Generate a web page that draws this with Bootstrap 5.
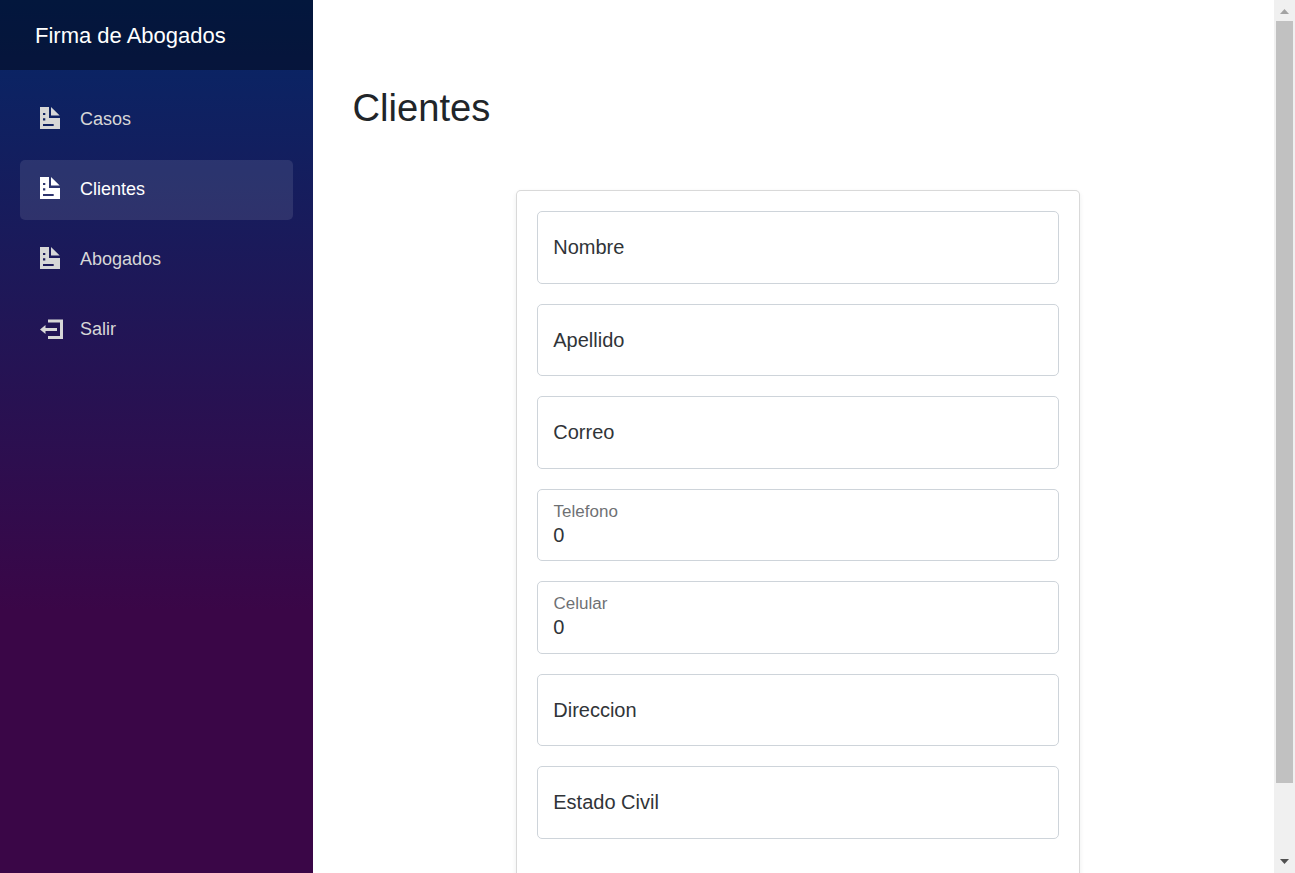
<!DOCTYPE html>
<html lang="es">
<head>
<meta charset="utf-8">
<title>Clientes</title>
<meta name="viewport" content="width=device-width, initial-scale=1">
<link href="https://cdn.jsdelivr.net/npm/bootstrap@5.3.0/dist/css/bootstrap.min.css" rel="stylesheet">
<style>
html { font-size: 20px; }
body { font-family: "Liberation Sans", Arial, sans-serif; }
.sidebar { width: 312.5px; background-image: linear-gradient(180deg, rgb(5,39,103) 0%, #3a0647 70%); }
.sidebar .nav { gap: 10px; padding: 20px; }
.top-row { height: 70px; padding-left: 35px; background: rgba(0,0,0,.4); }
.top-row .navbar-brand { font-size: 22px; }
.side-link { height: 60px; padding: 0 20px 1px; font-size: 18px; color: #d7d7d7; border-radius: 5px; }
.side-link.active { background: rgba(255,255,255,.1); color: #fff; }
.side-link svg { width: 24px; height: 22px; margin-right: 16px; margin-top: -3px; fill: currentColor; }
.content { padding: 85px 30px 0 40px; }
.content h2 { font-size: 38.16px; line-height: 46px; }
.client-card { width: 564px; margin-top: 59px; border-radius: 5px; border-color: rgba(0,0,0,.15); flex-shrink: 0; min-height: 760px; }
.client-card .card-body { gap: 20px; padding: 20px; }
.client-card .form-floating > .form-control { height: 72.5px; min-height: 0; border: 1px solid #ced4da; border-radius: 5px; color: #303438; }
.client-card .form-floating > .form-control:not(:placeholder-shown) { padding-top: 33px; }
.client-card .form-floating > label { color: #303438; padding-top: 20px; }
.client-card .form-floating > label::after { display: none; }
.client-card .form-floating > .form-control:not(:placeholder-shown) ~ label { color: #212529; opacity: .65; transform: scale(.85) translateY(-10px) translateX(3.5px); }
.scroll-rail { width: 21px; background: #f0f0f0; }
.scroll-thumb { width: 17px; height: 762px; background: #c1c1c1; }
.scroll-arrow { height: 21px; }
</style>
</head>
<body>
<svg class="d-none">
  <symbol id="doc" viewBox="0 0 24 22"><path fill-rule="evenodd" d="M0 0H9V11H20V22H0zM3 6V8H5.3V6zM3 11.3V13.5H5.3V11.3zM3 17V19H13.7V17zM11 0L19.7 8.5H11z"/></symbol>
  <symbol id="exit" viewBox="0 0 24 22"><path d="M8 .5H23V20H8V17H20V3.5H8zM0 10.5L5.5 6V9H17V12H5.5V15z"/></symbol>
</svg>
<div class="d-flex vh-100 overflow-hidden">
  <aside class="sidebar flex-shrink-0">
    <div class="top-row d-flex align-items-center"><a class="navbar-brand text-white" href="#">Firma de Abogados</a></div>
    <nav class="nav flex-column">
      <a class="side-link d-flex align-items-center text-decoration-none" href="#"><svg><use href="#doc"/></svg>Casos</a>
      <a class="side-link active d-flex align-items-center text-decoration-none" href="#"><svg><use href="#doc"/></svg>Clientes</a>
      <a class="side-link d-flex align-items-center text-decoration-none" href="#"><svg><use href="#doc"/></svg>Abogados</a>
      <a class="side-link d-flex align-items-center text-decoration-none" href="#"><svg class="mt-0"><use href="#exit"/></svg>Salir</a>
    </nav>
  </aside>
  <main class="content flex-grow-1 d-flex flex-column">
    <h2 class="mb-0">Clientes</h2>
    <form class="client-card card shadow-sm mx-auto">
      <div class="card-body d-flex flex-column">
        <div class="form-floating"><input class="form-control" id="nombre" placeholder=" "><label for="nombre">Nombre</label></div>
        <div class="form-floating"><input class="form-control" id="apellido" placeholder=" "><label for="apellido">Apellido</label></div>
        <div class="form-floating"><input class="form-control" id="correo" placeholder=" "><label for="correo">Correo</label></div>
        <div class="form-floating"><input class="form-control" id="telefono" placeholder=" " value="0"><label for="telefono">Telefono</label></div>
        <div class="form-floating"><input class="form-control" id="celular" placeholder=" " value="0"><label for="celular">Celular</label></div>
        <div class="form-floating"><input class="form-control" id="direccion" placeholder=" "><label for="direccion">Direccion</label></div>
        <div class="form-floating"><input class="form-control" id="estado" placeholder=" "><label for="estado">Estado Civil</label></div>
      </div>
    </form>
  </main>
  <div class="scroll-rail d-flex flex-column align-items-center flex-shrink-0">
    <svg class="scroll-arrow" width="21" viewBox="0 0 21 21"><path d="M6 14h9l-4.5-5z" fill="#a3a3a3"/></svg>
    <div class="scroll-thumb"></div>
    <svg class="scroll-arrow mt-auto" width="21" viewBox="0 0 21 21"><path d="M6 7h9l-4.5 5z" fill="#505050"/></svg>
  </div>
</div>
<script src="https://cdn.jsdelivr.net/npm/bootstrap@5.3.0/dist/js/bootstrap.bundle.min.js"></script>
</body>
</html>
